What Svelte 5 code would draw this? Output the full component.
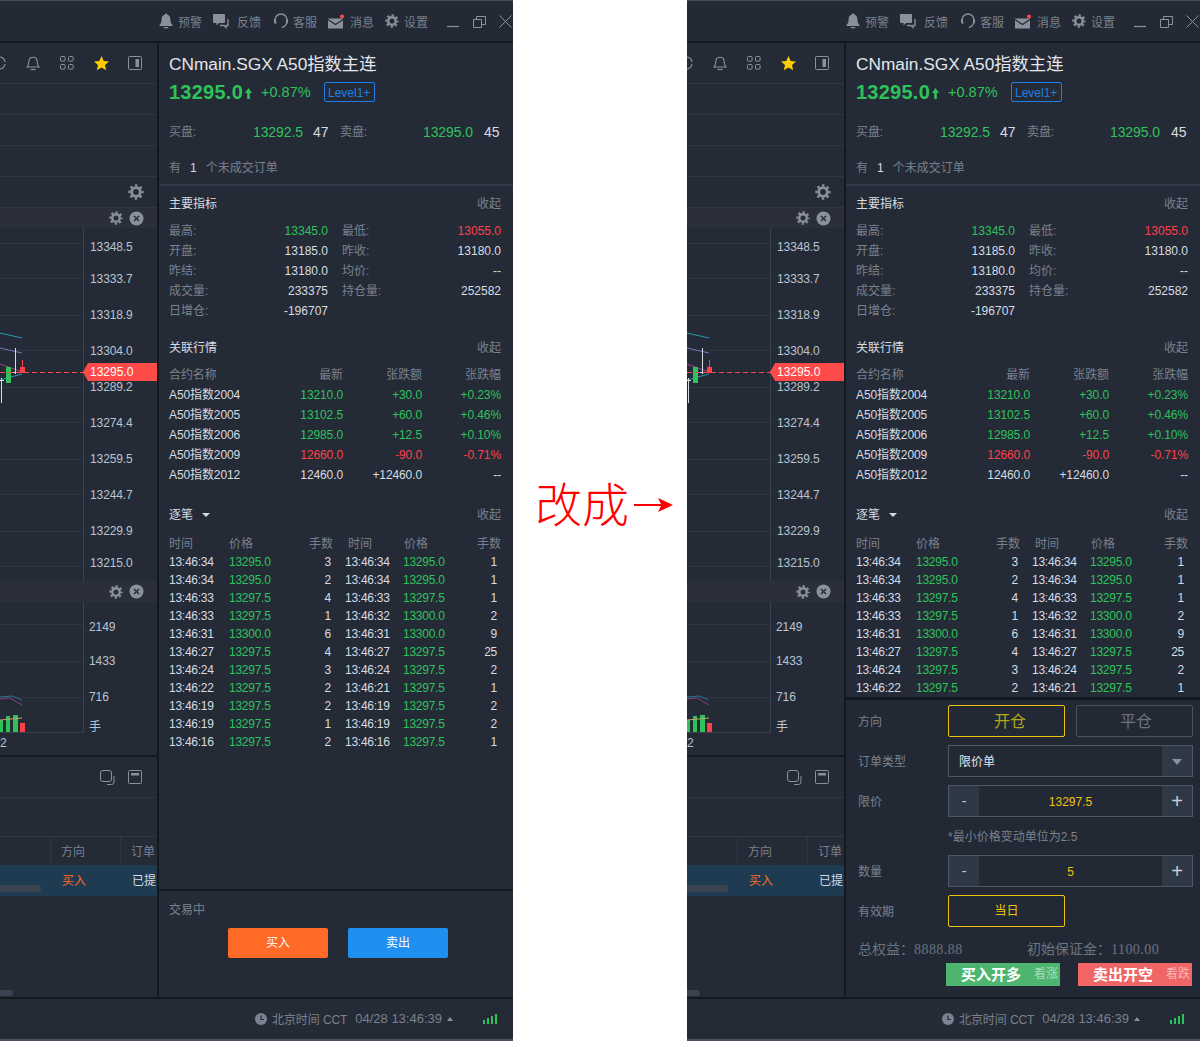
<script>
	const topItems = [
		{ icon: 'bell', label: '预警' },
		{ icon: 'chat', label: '反馈' },
		{ icon: 'headset', label: '客服' },
		{ icon: 'mail', label: '消息' },
		{ icon: 'gear', label: '设置' }
	];

	const indicators = [
		{ l: '最高:', v: '13345.0', c: 'up' },
		{ l: '最低:', v: '13055.0', c: 'down' },
		{ l: '开盘:', v: '13185.0' },
		{ l: '昨收:', v: '13180.0' },
		{ l: '昨结:', v: '13180.0' },
		{ l: '均价:', v: '--' },
		{ l: '成交量:', v: '233375' },
		{ l: '持仓量:', v: '252582' },
		{ l: '日增仓:', v: '-196707' }
	];

	const related = [
		{ n: 'A50指数2004', p: '13210.0', d: '+30.0', r: '+0.23%', c: 'up' },
		{ n: 'A50指数2005', p: '13102.5', d: '+60.0', r: '+0.46%', c: 'up' },
		{ n: 'A50指数2006', p: '12985.0', d: '+12.5', r: '+0.10%', c: 'up' },
		{ n: 'A50指数2009', p: '12660.0', d: '-90.0', r: '-0.71%', c: 'down' },
		{ n: 'A50指数2012', p: '12460.0', d: '+12460.0', r: '--', c: '' }
	];

	const ticks = [
		['13:46:34', '13295.0', 3, '13:46:34', '13295.0', 1],
		['13:46:34', '13295.0', 2, '13:46:34', '13295.0', 1],
		['13:46:33', '13297.5', 4, '13:46:33', '13297.5', 1],
		['13:46:33', '13297.5', 1, '13:46:32', '13300.0', 2],
		['13:46:31', '13300.0', 6, '13:46:31', '13300.0', 9],
		['13:46:27', '13297.5', 4, '13:46:27', '13297.5', 25],
		['13:46:24', '13297.5', 3, '13:46:24', '13297.5', 2],
		['13:46:22', '13297.5', 2, '13:46:21', '13297.5', 1],
		['13:46:19', '13297.5', 2, '13:46:19', '13297.5', 2],
		['13:46:19', '13297.5', 1, '13:46:19', '13297.5', 2],
		['13:46:16', '13297.5', 2, '13:46:16', '13297.5', 1]
	];

	// y positions are page coordinates, the chart starts at y=228
	const priceLabels = [
		['13348.5', 246], ['13333.7', 278], ['13318.9', 314], ['13304.0', 350], ['13289.2', 386],
		['13274.4', 422], ['13259.5', 458], ['13244.7', 494], ['13229.9', 530], ['13215.0', 562]
	];
	const priceGrid = [243, 278, 315, 350, 387, 422, 459, 494, 531, 566];
	const volLabels = [['2149', 626], ['1433', 660], ['716', 696], ['手', 726]];
	const volGrid = [624, 661, 697];
</script>

{#snippet gear(size)}
	<svg class="ico" width={size} height={size} viewBox="0 0 16 16">
		<circle cx="8" cy="8" r="4.3" fill="none" stroke="currentColor" stroke-width="2.8" />
		<circle cx="8" cy="8" r="6.6" fill="none" stroke="currentColor" stroke-width="2.2" stroke-dasharray="2.6 2.58" stroke-dashoffset="1.3" />
	</svg>
{/snippet}

{#snippet closeDot()}
	<svg class="ico" width="15" height="15" viewBox="0 0 15 15">
		<circle cx="7.5" cy="7.5" r="7" fill="#8b919c" />
		<path d="M5 5l5 5M10 5l-5 5" stroke="#2a303b" stroke-width="1.6" />
	</svg>
{/snippet}

{#snippet topIcon(name)}
	{#if name === 'bell'}
		<svg class="ico" width="14" height="16" viewBox="0 0 14 16">
			<path fill="currentColor" d="M7 .5c-.7 0-1.2.5-1.2 1.1C3.6 2.2 2.6 4 2.6 6.5c0 2.8-.8 4.2-2.1 5.4v1h13v-1c-1.3-1.2-2.1-2.6-2.1-5.4 0-2.5-1-4.3-3.2-4.9C8.2 1 7.7.5 7 .5zM4.8 14h4.4v1.2H4.8z" />
		</svg>
	{:else if name === 'chat'}
		<svg class="ico chat" width="16" height="15" viewBox="0 0 16 15">
			<path fill="currentColor" d="M1 0h10a1 1 0 0 1 1 1v7a1 1 0 0 1-1 1H6l-2.5 2.5V9H1a1 1 0 0 1-1-1V1a1 1 0 0 1 1-1z" />
			<path fill="none" stroke="currentColor" stroke-width="1.3" d="M15 5v6.500h-2v2l-2-2H7" />
		</svg>
	{:else if name === 'headset'}
		<svg class="ico headset" width="14" height="16" viewBox="0 0 14 16">
			<path fill="none" stroke="currentColor" stroke-width="1.4" d="M2.300 10.500C1.300 9.500 1 8.300 1 7a6 6 0 0 1 12 0c0 3-1.500 6.500-5 7.500" />
			<rect x="0" y="6" width="2" height="4.500" rx="1" fill="currentColor" />
			<rect x="12" y="6" width="2" height="4.500" rx="1" fill="currentColor" />
		</svg>
	{:else if name === 'mail'}
		<svg class="ico mail" width="16" height="15" viewBox="0 0 16 15">
			<path fill="currentColor" d="M0 4.500h15v10H0z" />
			<path fill="none" stroke="#232a36" stroke-width="1.2" d="M0 5.500l7.500 5 7.500-5" />
			<circle cx="14" cy="2.500" r="2" fill="#ff4a4a" />
		</svg>
	{:else}
		{@render gear(14)}
	{/if}
{/snippet}

{#snippet chartCol()}
	<div class="chart-col">
		<div class="toolbar">
			<svg class="ico refresh" width="6" height="14" viewBox="0 0 6 14">
				<path fill="none" stroke="currentColor" stroke-width="1.2" d="M0 1a6 6 0 0 1 5 5M5 8a6 6 0 0 1-5 5" />
			</svg>
			<svg class="ico" width="14" height="15" viewBox="0 0 14 15">
				<path fill="none" stroke="currentColor" stroke-width="1.1" d="M7 1.200C4.400 1.200 2.800 3 2.800 5.800c0 2.700-.6 4-1.800 5.200h12c-1.200-1.200-1.800-2.500-1.800-5.200C11.200 3 9.600 1.200 7 1.200z" />
				<path stroke="currentColor" stroke-width="1.2" d="M4.500 13.500h5" />
			</svg>
			<svg class="ico" width="14" height="14" viewBox="0 0 14 14">
				<g fill="none" stroke="currentColor" stroke-width="1">
					<rect x=".5" y=".5" width="4.600" height="4.600" rx="1" />
					<rect x="8.500" y=".5" width="4.600" height="4.600" rx="1" />
					<rect x=".5" y="8.500" width="4.600" height="4.600" rx="1" />
					<rect x="8.500" y="8.500" width="4.600" height="4.600" rx="1" />
				</g>
			</svg>
			<svg class="star" width="15" height="15" viewBox="0 0 15 15">
				<path fill="#ffcc00" d="M7.500 0l2.200 4.900 5.300.6-4 3.500 1.200 5.300-4.700-2.700-4.700 2.700L4 9 0 5.500l5.300-.6z" />
			</svg>
			<svg class="ico" width="14" height="14" viewBox="0 0 14 14">
				<rect x=".5" y=".5" width="13" height="13" rx="1" fill="none" stroke="currentColor" />
				<rect x="7.500" y="3" width="3.500" height="8" fill="currentColor" />
			</svg>
		</div>
		<div class="blank-row"></div>
		<div class="blank-row"></div>
		<div class="blank-row"></div>
		<div class="blank-row gear-row">{@render gear(16)}</div>
		<div class="pane-head">{@render gear(14)}{@render closeDot()}</div>

		<div class="chart main-chart">
			<svg width="157" height="353" viewBox="0 228 157 353">
				{#each priceGrid as y}
					<path d="M0 {y}.5H83" stroke="#2e3643" />
				{/each}
				<path d="M83.500 228V581" stroke="#3a424f" />
				<path d="M0 333L22 338" stroke="#2b96b0" fill="none" />
				<path d="M0 348L22 353" stroke="#7c78b8" fill="none" />
				<path d="M0 364L22 372" stroke="#a2448a" fill="none" />
				<path d="M0 380L22 374" stroke="#2b96b0" fill="none" />
				<path d="M15.500 348V374M13 372.500H18" stroke="#d8dce2" fill="none" />
				<path d="M1.500 378V403M0 380.500H4" stroke="#d8dce2" fill="none" />
				<rect x="6" y="367" width="5" height="16" fill="#2fc25b" />
				<path d="M22.500 360V372" stroke="#ff4048" />
				<rect x="20" y="367" width="5" height="6" fill="#ff4048" />
				<path d="M0 372.500H84" stroke="#ff4a4a" stroke-dasharray="5 3" />
			</svg>
			{#each priceLabels as [text, y]}
				<span class="axis-label" style="top: {y - 228 - 8}px">{text}</span>
			{/each}
			<span class="price-tag">13295.0</span>
		</div>

		<div class="pane-head tall">{@render gear(14)}{@render closeDot()}</div>

		<div class="chart vol-chart">
			<svg width="157" height="131" viewBox="0 602 157 131">
				{#each volGrid as y}
					<path d="M0 {y}.5H83" stroke="#2e3643" />
				{/each}
				<path d="M83.500 602V733M0 732.500H84" stroke="#3a424f" />
				<rect x="0" y="720" width="3" height="12" fill="#2fc25b" />
				<rect x="6" y="716" width="4" height="16" fill="#2fc25b" />
				<rect x="13" y="715" width="5" height="17" fill="#2fc25b" />
				<rect x="20" y="723" width="5" height="9" fill="#ff4048" />
				<path d="M0 699L10 698L22 705" stroke="#8a3f7c" fill="none" />
				<path d="M0 697L12 696L22 700" stroke="#27788f" fill="none" />
				<path d="M0 720L22 718" stroke="#c8a26a" fill="none" />
			</svg>
			{#each volLabels as [text, y]}
				<span class="axis-label vol" style="top: {y - 602 - 8}px">{text}</span>
			{/each}
		</div>
		<div class="time-row">2</div>

		<div class="orders">
			<div class="orders-bar">
				<svg class="ico" width="15" height="15" viewBox="0 0 15 15">
					<rect x=".5" y=".5" width="11" height="11" rx="2.500" fill="none" stroke="currentColor" />
					<path d="M14 6v6a2.500 2.500 0 0 1-2.500 2.500H7" fill="none" stroke="currentColor" />
				</svg>
				<svg class="ico" width="14" height="14" viewBox="0 0 14 14">
					<rect x=".5" y=".5" width="13" height="13" rx="1" fill="none" stroke="currentColor" />
					<rect x="3" y="3" width="8" height="2.500" fill="currentColor" />
				</svg>
			</div>
			<div class="orders-gap"></div>
			<div class="orders-head">
				<span></span>
				<span>方向</span>
				<span>订单</span>
			</div>
			<div class="orders-row">
				<span></span>
				<span class="buy">买入</span>
				<span>已提</span>
			</div>
			<div class="hscroll short"></div>
			<div class="hscroll tiny"></div>
		</div>
	</div>
{/snippet}

{#snippet tradeForm()}
	<div class="form">
		<div class="f-row">
			<span class="f-label">方向</span>
			<div class="f-btn on big open">开仓</div>
			<div class="f-btn off big close">平仓</div>
		</div>
		<div class="f-row">
			<span class="f-label">订单类型</span>
			<div class="f-box select">
				<span class="sel-text">限价单</span>
				<span class="side-cell"><i class="caret"></i></span>
			</div>
		</div>
		<div class="f-row">
			<span class="f-label">限价</span>
			<div class="f-box">
				<span class="side-cell">-</span>
				<span class="f-value">13297.5</span>
				<span class="side-cell plus">+</span>
			</div>
		</div>
		<div class="f-hint">*最小价格变动单位为2.5</div>
		<div class="f-row">
			<span class="f-label">数量</span>
			<div class="f-box">
				<span class="side-cell">-</span>
				<span class="f-value">5</span>
				<span class="side-cell plus">+</span>
			</div>
		</div>
		<div class="f-row">
			<span class="f-label">有效期</span>
			<div class="f-btn on day">当日</div>
		</div>
		<div class="f-money">
			<span>总权益：<em>8888.88</em></span>
			<span>初始保证金：<em>1100.00</em></span>
		</div>
		<div class="f-actions">
			<div class="act long"><b>买入开多</b><span>看涨</span></div>
			<div class="act short"><b>卖出开空</b><span>看跌</span></div>
		</div>
	</div>
{/snippet}

{#snippet panel(withForm)}
	<section class="panel">
		<header class="topbar">
			{#each topItems as item}
				<div class="top-item">
					{@render topIcon(item.icon)}
					<span>{item.label}</span>
				</div>
			{/each}
			<div class="win">
				<svg class="ico" width="13" height="13" viewBox="0 0 13 13"><path d="M0 11.500H12" stroke="currentColor" stroke-width="1.2" /></svg>
				<svg class="ico" width="13" height="13" viewBox="0 0 13 13">
					<path fill="none" stroke="currentColor" d="M.5 4.500h8v8h-8zM3.500 4.500v-3h9v8h-4" />
				</svg>
				<svg class="ico" width="13" height="13" viewBox="0 0 13 13"><path d="M.5.500l12 12M12.500.500l-12 12" stroke="currentColor" /></svg>
			</div>
		</header>

		<div class="main">
			{@render chartCol()}

			<aside class="side">
				<div class="side-top">
					<div class="title">CNmain.SGX A50指数主连</div>
					<div class="quote">
						<span class="last">13295.0</span>
						<svg class="arrow" width="7" height="11" viewBox="0 0 7 11"><path fill="#2fc25b" d="M3.500 0L7 5H4.800v6H2.200V5H0z" /></svg>
						<span class="pct">+0.87%</span>
						<span class="badge">Level1+</span>
					</div>
					<div class="bid">
						<span class="muted">买盘:</span><span class="up">13292.5</span><span>47</span>
						<span class="muted">卖盘:</span><span class="up">13295.0</span><span>45</span>
					</div>
					<div class="open-orders"><span>有</span><b>1</b><span>个未成交订单</span></div>
				</div>

				<div class="sec-head first"><span>主要指标</span><span class="muted">收起</span></div>
				<div class="ind-grid">
					{#each indicators as item}
						<div class="ind"><span class="muted">{item.l}</span><span class={item.c}>{item.v}</span></div>
					{/each}
				</div>

				<div class="sec-head rel-head"><span>关联行情</span><span class="muted">收起</span></div>
				<div class="rel-row rel-title muted"><span>合约名称</span><span>最新</span><span>张跌额</span><span>张跌幅</span></div>
				{#each related as row}
					<div class="rel-row">
						<span>{row.n}</span>
						<span class={row.c}>{row.p}</span>
						<span class={row.c}>{row.d}</span>
						<span class={row.c}>{row.r}</span>
					</div>
				{/each}

				<div class="sec-head tick-head">
					<span>逐笔<i class="drop"></i></span><span class="muted">收起</span>
				</div>
				<div class="tick tick-title muted">
					<span>时间</span><span>价格</span><span>手数</span><span>时间</span><span>价格</span><span>手数</span>
				</div>
				{#each withForm ? ticks.slice(0, 8) : ticks as row}
					<div class="tick">
						<span>{row[0]}</span><span class="up">{row[1]}</span><span class="qty">{row[2]}</span>
						<span>{row[3]}</span><span class="up">{row[4]}</span><span class="qty">{row[5]}</span>
					</div>
				{/each}

				<div class="fill"></div>

				{#if withForm}
					{@render tradeForm()}
				{:else}
					<div class="trade">
						<div class="muted">交易中</div>
						<div class="trade-btns">
							<div class="t-btn buy-btn">买入</div>
							<div class="t-btn sell-btn">卖出</div>
						</div>
					</div>
				{/if}
			</aside>
		</div>

		<footer class="status">
			<svg width="12" height="12" viewBox="0 0 12 12">
				<circle cx="6" cy="6" r="6" fill="#7b8290" />
				<path d="M6 2.500V6.500H9" fill="none" stroke="#232a36" stroke-width="1.2" />
			</svg>
			<span class="cct">北京时间 CCT</span>
			<span class="clock">04/28 13:46:39</span>
			<i class="tri"></i>
			<svg class="signal" width="14" height="10" viewBox="0 0 14 10">
				<path fill="#2fc25b" d="M0 6h2v4H0zM4 4h2v6H4zM8 2h2v8H8zM12 0h2v10h-2z" />
			</svg>
		</footer>
	</section>
{/snippet}

<div class="shot">
	{@render panel(false)}
	<div class="gap">
		<span>改成</span>
		<svg width="39" height="14" viewBox="0 0 39 14">
			<path fill="#f00" d="M0 6h27l-3-6 15 7-15 7 3-6H0z" />
		</svg>
	</div>
	{@render panel(true)}
</div>

<style>
	:global(body) {
		margin: 0;
		background: #fff;
	}

	.shot {
		display: flex;
		width: 1200px;
		height: 1041px;
		font: 12px "Liberation Sans", "Noto Sans CJK SC", sans-serif;
		color: #d7dce3;
		overflow: hidden;
	}

	.panel {
		width: 513px;
		height: 1041px;
		display: flex;
		flex-direction: column;
		background: #242b37;
		overflow: hidden;
		flex: none;
	}

	.gap {
		flex: 1;
		display: flex;
		align-items: center;
		justify-content: center;
		gap: 5px;
		padding: 0 0 38px 8px;
		color: #f00;
		font-size: 47px;
		font-family: "Liberation Serif", "Noto Sans CJK SC", serif;
		font-weight: 300;
		white-space: nowrap;
	}

	.gap svg {
		margin-top: 6px;
	}

	.ico {
		display: block;
		color: #8b919c;
		flex: none;
	}

	.muted {
		color: #7a818d;
	}

	.up {
		color: #2fc25b;
	}

	.down {
		color: #ff4048;
	}

	.topbar {
		height: 43px;
		box-sizing: border-box;
		border-top: 1px solid #484e59;
		border-bottom: 2px solid #14181f;
		display: flex;
		align-items: center;
		justify-content: flex-end;
		padding-right: 1px;
		color: #7a818d;
		background: #232a36;
		flex: none;
	}

	.top-item {
		display: flex;
		align-items: center;
		gap: 5px;
		margin-right: 11px;
	}

	.top-item .chat {
		margin-right: 3px;
	}

	.top-item .headset {
		margin-left: 2px;
	}

	.top-item .mail {
		margin-right: 1px;
	}

	.win {
		display: flex;
		gap: 13px;
		margin-left: 8px;
	}

	.main {
		flex: 1;
		display: flex;
		min-height: 0;
	}

	.chart-col {
		width: 159px;
		box-sizing: border-box;
		border-right: 2px solid #14181f;
		display: flex;
		flex-direction: column;
		flex: none;
	}

	.toolbar {
		height: 41px;
		box-sizing: border-box;
		border-bottom: 1px solid #2e3643;
		display: flex;
		align-items: center;
		gap: 20px;
		padding-right: 15px;
		flex: none;
	}

	.refresh {
		margin-right: auto;
	}

	.star {
		margin-right: -1px;
	}

	.blank-row {
		height: 31px;
		box-sizing: border-box;
		border-bottom: 1px solid #2e3643;
		flex: none;
	}

	.gear-row {
		display: flex;
		align-items: center;
		justify-content: flex-end;
		padding-right: 13px;
		color: #8b919c;
	}

	.pane-head {
		height: 20px;
		display: flex;
		align-items: center;
		justify-content: flex-end;
		gap: 6px;
		padding-right: 13px;
		background: #2b2f39;
		flex: none;
	}

	.pane-head.tall {
		height: 21px;
	}

	.chart {
		position: relative;
		flex: none;
	}

	.chart svg {
		display: block;
	}

	.main-chart {
		height: 353px;
	}

	.vol-chart {
		height: 131px;
	}

	.axis-label {
		position: absolute;
		left: 90px;
		line-height: 18px;
		letter-spacing: -0.1px;
		color: #b9c3cf;
	}

	.axis-label.vol {
		left: 89px;
	}

	.price-tag {
		position: absolute;
		left: 83px;
		top: 135px;
		width: 74px;
		height: 18px;
		box-sizing: border-box;
		padding-left: 7px;
		line-height: 18px;
		background: #ff4a4a;
		color: #fff;
		clip-path: polygon(5px 0, 100% 0, 100% 100%, 5px 100%, 0 50%);
	}

	.time-row {
		height: 24px;
		line-height: 20px;
		box-sizing: border-box;
		border-bottom: 2px solid #14181f;
		flex: none;
		color: #b9c3cf;
	}

	.orders {
		flex: 1;
		position: relative;
		overflow: hidden;
	}

	.orders-bar {
		height: 41px;
		box-sizing: border-box;
		border-bottom: 1px solid #2e3643;
		display: flex;
		align-items: center;
		justify-content: flex-end;
		gap: 13px;
		padding-right: 15px;
	}

	.orders-gap {
		height: 38px;
	}

	.orders-head,
	.orders-row {
		display: grid;
		grid-template-columns: 51px 70px 40px;
		white-space: nowrap;
	}

	.orders-head {
		height: 29px;
		box-sizing: border-box;
		border-top: 1px solid #2e3643;
		color: #7a818d;
		line-height: 30px;
	}

	.orders-head span {
		border-right: 1px solid #2e3643;
		padding-left: 10px;
	}

	.orders-head span:last-child {
		border-right: 0;
	}

	.orders-row {
		height: 31px;
		line-height: 32px;
		background: #1f3b52;
	}

	.orders-row span {
		padding-left: 11px;
	}

	.buy {
		color: #ff6a26;
	}

	.hscroll {
		position: absolute;
		left: 0;
		background: #3a4350;
		border-radius: 0 3px 3px 0;
	}

	.hscroll.short {
		top: 128px;
		width: 41px;
		height: 7px;
	}

	.hscroll.tiny {
		top: 233px;
		width: 13px;
		height: 6px;
	}

	.side {
		flex: 1;
		display: flex;
		flex-direction: column;
		min-width: 0;
	}

	.side-top {
		padding: 0 12px 8px 10px;
		border-bottom: 2px solid #2f3846;
	}

	.title {
		height: 40px;
		box-sizing: border-box;
		padding-top: 1px;
		line-height: 40px;
		font-size: 17.3px;
		color: #e3e6ea;
	}

	.quote {
		height: 18px;
		display: flex;
		align-items: center;
	}

	.last {
		font-size: 20px;
		font-weight: 700;
		letter-spacing: 0.25px;
		color: #2fc25b;
	}

	.arrow {
		margin: 2px 0 0 2px;
	}

	.pct {
		font-size: 14.5px;
		color: #2fc25b;
		margin-left: 9px;
	}

	.badge {
		margin-left: 13px;
		width: 51px;
		height: 20px;
		box-sizing: border-box;
		padding-top: 1px;
		border: 1px solid #1f7fe5;
		border-radius: 2px;
		color: #1f7fe5;
		text-align: center;
		line-height: 18px;
	}

	.bid {
		margin-top: 21px;
		height: 18px;
		box-sizing: border-box;
		padding-top: 1px;
		line-height: 18px;
		display: grid;
		grid-template-columns: 84px 60px 27px 83px 61px auto;
		font-size: 14px;
		letter-spacing: -0.1px;
	}

	.bid .muted {
		font-size: 12px;
	}

	.open-orders {
		margin-top: 18px;
		height: 18px;
		box-sizing: border-box;
		padding-top: 1px;
		line-height: 18px;
		display: flex;
		gap: 9px;
		color: #7a818d;
	}

	.open-orders b {
		font-weight: 400;
		color: #d7dce3;
	}

	.sec-head {
		margin-left: 10px;
		margin-right: 12px;
		height: 18px;
		box-sizing: border-box;
		padding-top: 1px;
		line-height: 18px;
		display: flex;
		justify-content: space-between;
		flex: none;
	}

	.sec-head.first {
		margin-top: 8px;
	}

	.rel-head {
		margin-top: 18px;
	}

	.tick-head {
		margin-top: 21px;
	}

	.ind-grid {
		margin: 8px 12px 0 10px;
		display: grid;
		grid-template-columns: 159px 159px;
		column-gap: 14px;
	}

	.ind {
		height: 20px;
		box-sizing: border-box;
		padding-top: 1px;
		line-height: 20px;
		display: flex;
		justify-content: space-between;
	}

	.rel-row {
		margin: 0 12px 0 10px;
		height: 20px;
		box-sizing: border-box;
		padding-top: 1px;
		line-height: 20px;
		display: grid;
		grid-template-columns: 100px 74px 79px 79px;
		text-align: right;
		letter-spacing: -0.1px;
		flex: none;
	}

	.rel-row span:first-child {
		text-align: left;
	}

	.rel-title {
		margin-top: 8px;
	}

	.drop {
		display: inline-block;
		margin-left: 9px;
		vertical-align: 2px;
		border: 4px solid transparent;
		border-top: 4px solid #d7dce3;
		border-bottom: 0;
	}

	.tick {
		margin: 0 12px 0 10px;
		height: 18px;
		box-sizing: border-box;
		padding-top: 1px;
		line-height: 18px;
		display: grid;
		grid-template-columns: 60px 60px 44px 70px 58px 40px;
		letter-spacing: -0.25px;
		flex: none;
	}

	.tick span:nth-child(3),
	.tick span:nth-child(6) {
		text-align: right;
	}

	.tick span:nth-child(4) {
		padding-left: 12px;
	}

	.tick .qty {
		padding-right: 2px;
	}

	.tick span.qty:nth-child(6) {
		padding-right: 4px;
	}

	.tick-title {
		margin-top: 11px;
		letter-spacing: 0;
	}

	.tick-title span:nth-child(4) {
		padding-left: 15px;
	}

	.tick-title span:nth-child(5) {
		padding-left: 1px;
	}

	.fill {
		flex: 1;
	}

	.trade {
		height: 108px;
		box-sizing: border-box;
		border-top: 2px solid #14181f;
		padding: 10px 0 0 10px;
		line-height: 18px;
		flex: none;
	}

	.trade-btns {
		display: flex;
		gap: 20px;
		margin: 9px 0 0 59px;
	}

	.t-btn {
		width: 100px;
		height: 30px;
		border-radius: 2px;
		line-height: 30px;
		text-align: center;
		color: #fff;
	}

	.buy-btn {
		background: #ff6a26;
	}

	.sell-btn {
		background: #2090f0;
	}

	.form {
		height: 300px;
		box-sizing: border-box;
		border-top: 3px solid #14181f;
		padding: 5px 7px 0 12px;
		background: #222935;
		color: #7a818d;
		flex: none;
	}

	.f-row {
		height: 32px;
		display: flex;
		align-items: center;
		margin-bottom: 8px;
		gap: 11px;
	}

	.f-label {
		width: 90px;
		margin: 0 -11px 2px 0;
		flex: none;
	}

	.f-btn {
		width: 117px;
		height: 32px;
		box-sizing: border-box;
		border-radius: 2px;
		line-height: 31px;
		text-align: center;
	}

	.f-btn.big {
		font-size: 16px;
	}

	.f-btn.open {
		padding-left: 7px;
	}

	.f-btn.close {
		padding-left: 3px;
	}

	.f-btn.on {
		border: 1px solid #f0c30f;
		color: #b4a71e;
	}

	.f-btn.day {
		color: #f0c30f;
	}

	.f-btn.off {
		border: 1px solid #4a5260;
		color: #6b7280;
	}

	.f-box {
		width: 245px;
		height: 32px;
		box-sizing: border-box;
		border: 1px solid #4f5764;
		display: flex;
		align-items: stretch;
	}

	.side-cell {
		width: 30px;
		background: #2f3845;
		color: #c9ced6;
		font-size: 14px;
		line-height: 30px;
		text-align: center;
		flex: none;
	}

	.side-cell.plus {
		font-size: 20px;
	}

	.f-value {
		flex: 1;
		line-height: 32px;
		text-align: center;
		color: #f0c30f;
	}

	.select {
		justify-content: space-between;
	}

	.sel-text {
		padding-left: 10px;
		line-height: 32px;
		color: #e3e6ea;
	}

	.caret {
		display: inline-block;
		vertical-align: 1px;
		border: 5.5px solid transparent;
		border-top: 6px solid #8b919c;
		border-bottom: 0;
	}

	.f-hint {
		height: 38px;
		margin: -8px 0 0 90px;
		line-height: 40px;
	}

	.f-money {
		display: flex;
		font-size: 14px;
		line-height: 18px;
		margin-top: 13px;
		color: #6c7480;
	}

	.f-money span:first-child {
		width: 169px;
	}

	.f-money em {
		font: 14px "Liberation Serif", serif;
		letter-spacing: 0.45px;
	}

	.f-actions {
		display: flex;
		gap: 18px;
		margin: 5px 0 0 88px;
	}

	.act {
		width: 114px;
		height: 23px;
		line-height: 23px;
		display: flex;
		justify-content: space-between;
		padding: 0 2px 0 15px;
		box-sizing: border-box;
		color: rgba(255, 255, 255, 0.55);
	}

	.act b {
		font-size: 15px;
		color: #fff;
	}

	.act.long {
		background: #4db56f;
	}

	.act.short {
		background: #f06565;
	}

	.status {
		height: 44px;
		box-sizing: border-box;
		border-top: 2px solid #14181f;
		border-bottom: 2px solid #4a5160;
		display: flex;
		align-items: center;
		justify-content: flex-end;
		padding-right: 16px;
		color: #7a818d;
		flex: none;
	}

	.cct {
		margin: 0 0 2px 5px;
		letter-spacing: -0.1px;
	}

	.clock {
		margin: 0 0 2px 8px;
		font-size: 13px;
	}

	.tri {
		margin-left: 5px;
		border: 3.5px solid transparent;
		border-bottom: 4px solid #8b919c;
		border-top: 0;
	}

	.signal {
		margin-left: 30px;
	}
</style>
